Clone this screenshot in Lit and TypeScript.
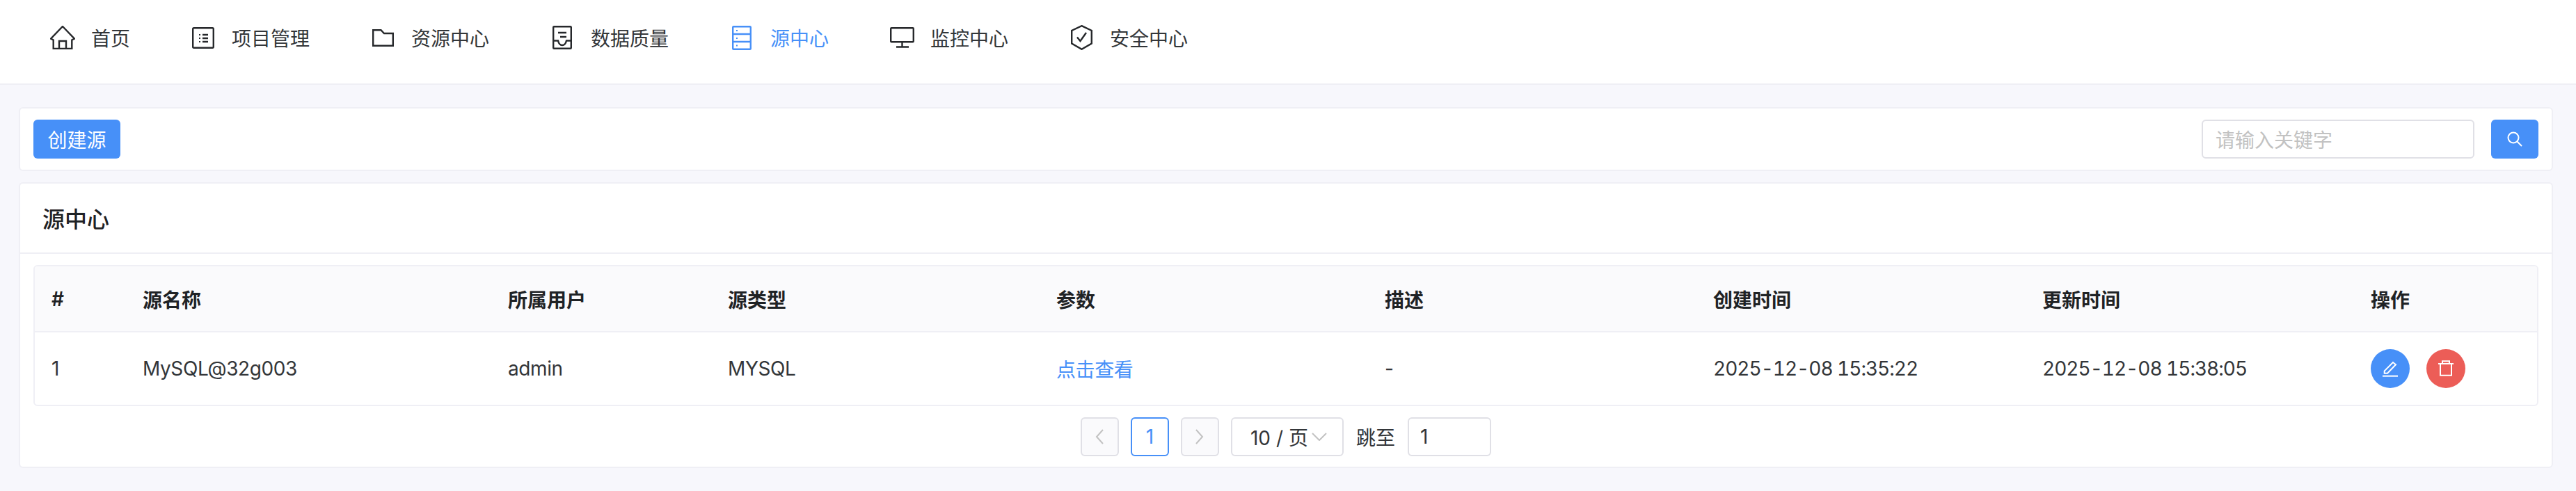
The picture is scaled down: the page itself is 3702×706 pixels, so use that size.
// app.ts
import { LitElement, html, css, svg } from 'lit';
import { customElement } from 'lit/decorators.js';

const navItems = [
  {
    label: '首页',
    w: 36,
    h: 34,
    icon: svg`<path d="M18 1 35 18.7 31.3 20.5V33H4.7V20.5L1 18.7Z"/><path d="M13 33V22H23V33"/>`,
  },
  {
    label: '项目管理',
    w: 32,
    h: 31,
    icon: svg`<rect x="1.2" y="1.2" width="29.6" height="28.6" rx="1.5"/><path d="M15 11H23M15 16H23M15 21H23"/><path d="M10 11H12M10 16H12M10 21H12" stroke-width="2"/>`,
  },
  {
    label: '资源中心',
    w: 31,
    h: 25,
    icon: svg`<path d="M1.2 1.2H12.5L17 6H29.8V23.8H1.2Z"/>`,
  },
  {
    label: '数据质量',
    w: 28,
    h: 34,
    icon: svg`<rect x="1.2" y="1.2" width="25.6" height="31.6" rx="1"/><path d="M8 10H20M11 16H20"/><path d="M1.2 21.5H8C9 26 11 28 14 28 17 28 19 26 20 21.5H26.8"/>`,
  },
  {
    label: '源中心',
    w: 28,
    h: 35,
    active: true,
    icon: svg`<rect x="1.2" y="1.2" width="25.6" height="32.6" rx="1"/><path d="M1.2 12H26.8M1.2 23H26.8"/><path d="M6 7H8M6 18H8M6 28.5H8" stroke-width="2"/>`,
  },
  {
    label: '监控中心',
    w: 35,
    h: 30,
    icon: svg`<rect x="1.2" y="1.2" width="32.6" height="20" rx="1"/><path d="M17.5 21V28M9 28.5H27"/>`,
  },
  {
    label: '安全中心',
    w: 31,
    h: 36,
    icon: svg`<path d="M15.5 1.2 29.8 8V26.5L15.5 34.8 1.2 26.5V8Z"/><path d="M9 17.5 13.5 23 22 11"/>`,
  },
];

const columns = ['#', '源名称', '所属用户', '源类型', '参数', '描述', '创建时间', '更新时间', '操作'];

@customElement('app-root')
export class AppRoot extends LitElement {
  static styles = css`
    :host {
      display: block;
      min-height: 706px;
      background: #f7f7fc;
      color: #333639;
      font-family: Inter, 'Noto Sans CJK SC', sans-serif;
      font-size: 28px;
    }

    * {
      box-sizing: border-box;
    }

    .nav {
      display: flex;
      align-items: center;
      height: 122px;
      padding: 0 0 12px 28px;
      background: #fff;
      border-bottom: 2px solid #efeff5;
    }

    .nav-item {
      display: flex;
      align-items: center;
      padding: 0 43px 0 42px;
      line-height: 40px;
    }

    .nav-item.active {
      color: #4790f8;
    }

    .nav-label {
      margin-top: 4px;
    }

    .nav-icon {
      display: flex;
      align-items: center;
      justify-content: center;
      width: 40px;
      margin-right: 21px;
    }

    .nav-icon svg {
      fill: none;
      stroke: #26282b;
      stroke-width: 2.4;
    }

    .active .nav-icon svg {
      stroke: #4790f8;
    }

    main {
      display: flex;
      flex-direction: column;
      gap: 16px;
      padding: 32px 33px 33px 27px;
    }

    .card {
      background: #fff;
      border: 2px solid #efeff5;
      border-radius: 6px;
    }

    .toolbar {
      display: flex;
      align-items: center;
      justify-content: space-between;
      height: 92px;
      padding: 0 19px;
    }

    .btn {
      display: flex;
      align-items: center;
      justify-content: center;
      height: 56px;
      border: 0;
      border-radius: 6px;
      background: #4790f8;
      color: #fff;
      font: inherit;
    }

    .btn.create {
      width: 125px;
    }

    .btn.search {
      width: 68px;
    }

    .search-box {
      display: flex;
      align-items: center;
      gap: 24px;
    }

    .field {
      display: flex;
      align-items: center;
      height: 56px;
      border: 2px solid #e0e0e6;
      border-radius: 6px;
      background: #fff;
    }

    .keyword {
      width: 392px;
      padding-left: 18px;
      color: #c2c2c2;
    }

    .card-title {
      display: flex;
      align-items: center;
      height: 101px;
      padding: 0 0 1px 32px;
      border-bottom: 2px solid #efeff5;
      color: #1f2225;
      font-size: 32px;
      font-weight: 500;
    }

    .card-body {
      padding: 16px 19px 15px;
    }

    .table {
      border: 2px solid #efeff5;
      border-radius: 6px;
      overflow: hidden;
    }

    .row {
      display: grid;
      grid-template-columns: 131px 525px 316px 472px 472px 472px 473px 472px 1fr;
      align-items: center;
      height: 104px;
      letter-spacing: -0.4px;
    }

    .row > div {
      padding-left: 24px;
    }

    .row.head {
      height: 95px;
      background: #fafafc;
      border-bottom: 2px solid #efeff5;
      color: #1f2225;
      font-weight: 600;
      letter-spacing: 0;
    }

    .row .time {
      font-variant-numeric: tabular-nums;
      letter-spacing: -1px;
    }

    .link {
      color: #4790f8;
    }

    .actions {
      display: flex;
      gap: 24px;
    }

    .circle {
      display: flex;
      align-items: center;
      justify-content: center;
      width: 56px;
      height: 56px;
      border-radius: 50%;
      background: #4790f8;
    }

    .circle.danger {
      background: #ec5d57;
    }

    .circle svg,
    .btn svg {
      fill: none;
      stroke: #fff;
      stroke-width: 2;
    }

    .pager {
      display: flex;
      justify-content: center;
      align-items: center;
      gap: 17px;
      margin-top: 16px;
    }

    .page {
      justify-content: center;
      width: 55px;
    }

    .page svg,
    .size svg {
      fill: none;
      stroke: #c2c2c2;
      stroke-width: 2;
    }

    .page.disabled {
      background: #fafafc;
    }

    .page.current {
      border-color: #4790f8;
      color: #4790f8;
    }

    .size {
      justify-content: space-between;
      width: 162px;
      padding: 0 22px 0 26px;
    }

    .jump {
      margin: 0 1px;
    }

    .jump-input {
      width: 120px;
      padding-left: 16px;
    }
  `;

  render() {
    return html`
      <nav class="nav">
        ${navItems.map(
          (item) => html`
            <div class="nav-item ${item.active ? 'active' : ''}">
              <span class="nav-icon">
                <svg width=${item.w} height=${item.h} viewBox="0 0 ${item.w} ${item.h}">${item.icon}</svg>
              </span>
              <span class="nav-label">${item.label}</span>
            </div>
          `
        )}
      </nav>
      <main>
        <section class="card toolbar">
          <button class="btn create">创建源</button>
          <div class="search-box">
            <div class="field keyword">请输入关键字</div>
            <button class="btn search">
              <svg width="26" height="26" viewBox="0 0 26 26">
                <circle cx="11" cy="11" r="7.5" />
                <path d="M16.5 16.5 23 23" />
              </svg>
            </button>
          </div>
        </section>
        <section class="card">
          <div class="card-title">源中心</div>
          <div class="card-body">
            <div class="table">
              <div class="row head">${columns.map((c) => html`<div>${c}</div>`)}</div>
              <div class="row">
                <div>1</div>
                <div>MySQL@32g003</div>
                <div>admin</div>
                <div>MYSQL</div>
                <div class="link">点击查看</div>
                <div>-</div>
                <div class="time">2025-12-08 15:35:22</div>
                <div class="time">2025-12-08 15:38:05</div>
                <div class="actions">
                  <span class="circle">
                    <svg width="24" height="24" viewBox="0 0 24 24">
                      <path d="M3.7 18.7V15.3L16 3 20 6.3 8 18.7Z" />
                      <path d="M1 22.7H23" />
                    </svg>
                  </span>
                  <span class="circle danger">
                    <svg width="24" height="24" viewBox="0 0 24 24">
                      <path d="M1 5H23M7 5V1.2H17V5M4 5V21.8H20V5" />
                    </svg>
                  </span>
                </div>
              </div>
            </div>
            <div class="pager">
              <div class="field page disabled">
                <svg width="12" height="22" viewBox="0 0 12 22"><path d="M11 1 2 11 11 21" /></svg>
              </div>
              <div class="field page current">1</div>
              <div class="field page disabled">
                <svg width="12" height="22" viewBox="0 0 12 22"><path d="M1 1 10 11 1 21" /></svg>
              </div>
              <div class="field size">
                <span>10 / 页</span>
                <svg width="22" height="12" viewBox="0 0 22 12"><path d="M1 1 11 11 21 1" /></svg>
              </div>
              <span class="jump">跳至</span>
              <div class="field jump-input">1</div>
            </div>
          </div>
        </section>
      </main>
    `;
  }
}
